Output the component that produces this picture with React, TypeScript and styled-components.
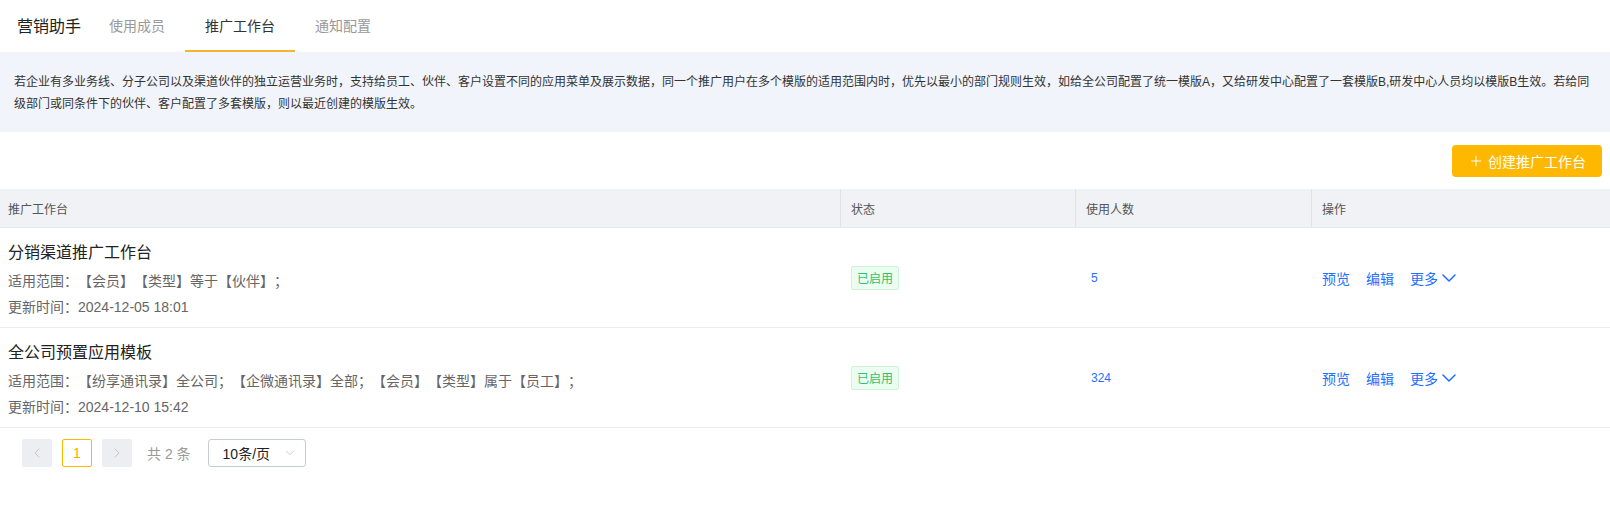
import { createGlobalStyle, styled } from 'styled-components';
import { ChevronDown, ChevronLeft, ChevronRight, Plus } from 'lucide-react';

const GlobalStyle = createGlobalStyle`
  * {
    box-sizing: border-box;
  }
  body {
    margin: 0;
    background: #fff;
    font-family: 'Liberation Sans', 'Noto Sans CJK SC', sans-serif;
    color: #333;
    text-spacing-trim: space-all;
  }
`;

type Workbench = {
  id: number;
  name: string;
  scope: string;
  updatedAt: string;
  enabled: boolean;
  users: number;
};

const workbenches: Workbench[] = [
  {
    id: 1,
    name: '分销渠道推广工作台',
    scope: '【会员】【类型】等于【伙伴】；',
    updatedAt: '2024-12-05 18:01',
    enabled: true,
    users: 5,
  },
  {
    id: 2,
    name: '全公司预置应用模板',
    scope: '【纷享通讯录】全公司；【企微通讯录】全部；【会员】【类型】属于【员工】；',
    updatedAt: '2024-12-10 15:42',
    enabled: true,
    users: 324,
  },
];

const tabs = ['使用成员', '推广工作台', '通知配置'];
const activeTab = '推广工作台';

const COLUMNS = '840px 235px 236px 1fr';

const StyledHeader = styled.header`
  display: flex;
  align-items: stretch;
  height: 52px;
  padding-left: 17px;
`;

const StyledBrand = styled.div`
  display: flex;
  align-items: center;
  font-size: 16px;
  color: #222;
  margin-right: 8px;
  padding-bottom: 2px;
`;

const StyledTab = styled.div<{ $active?: boolean }>`
  display: flex;
  align-items: center;
  padding: 0 20px;
  font-size: 14px;
  color: ${({ $active }) => ($active ? '#333' : '#999')};
  border-bottom: 2px solid ${({ $active }) => ($active ? '#f5b52e' : 'transparent')};
`;

const StyledNotice = styled.div`
  background: #f1f4fa;
  padding: 19px 12px 17px 14px;
  font-size: 12px;
  line-height: 22px;
  color: #333;
`;

const StyledToolbar = styled.div`
  display: flex;
  justify-content: flex-end;
  padding: 13px 8px 12px;
`;

const StyledPrimaryButton = styled.button`
  display: flex;
  align-items: center;
  gap: 4px;
  height: 32px;
  padding: 0 16px;
  border: none;
  border-radius: 4px;
  background: #ffb800;
  color: #fff;
  font-family: inherit;
  font-size: 14px;
  cursor: pointer;
`;

const StyledHeadRow = styled.div`
  display: grid;
  grid-template-columns: ${COLUMNS};
  height: 39px;
  background: #f0f2f6;
  border-bottom: 1px solid #e6e9ef;
`;

const StyledHeadCell = styled.div<{ $first?: boolean }>`
  display: flex;
  align-items: center;
  padding-left: ${({ $first }) => ($first ? '8px' : '10px')};
  font-size: 12px;
  color: #555;
  border-left: ${({ $first }) => ($first ? 'none' : '1px solid #dfe2e8')};
`;

const StyledRow = styled.div`
  display: grid;
  grid-template-columns: ${COLUMNS};
  height: 100px;
  border-bottom: 1px solid #e8ebf0;
`;

const StyledCell = styled.div`
  display: flex;
  align-items: center;
  padding-left: 11px;
`;

const StyledInfoCell = styled.div`
  display: flex;
  flex-direction: column;
  padding: 13px 8px 0;
`;

const StyledName = styled.div`
  font-size: 16px;
  line-height: 24px;
  color: #222;
  margin-bottom: 3px;
`;

const StyledMeta = styled.div`
  font-size: 14px;
  line-height: 26px;
  color: #666;
`;

const StyledStatusTag = styled.span`
  display: inline-flex;
  align-items: center;
  height: 24px;
  padding: 0 5px;
  border: 1px solid #cdf3d9;
  border-radius: 2px;
  background: #ebfdf1;
  color: #31c06f;
  font-size: 12px;
`;

const StyledCount = styled.span`
  padding-left: 5px;
  font-size: 12px;
  color: #1f6fff;
`;

const StyledActions = styled.div`
  display: flex;
  align-items: center;
  gap: 16px;
`;

const StyledAction = styled.a`
  display: inline-flex;
  align-items: center;
  gap: 4px;
  font-size: 14px;
  color: #1f6fff;
  cursor: pointer;
`;

const StyledPagination = styled.div`
  display: flex;
  align-items: center;
  padding: 11px 22px;
  font-size: 14px;
`;

const StyledPageButton = styled.button<{ $current?: boolean }>`
  display: flex;
  align-items: center;
  justify-content: center;
  width: 30px;
  height: 28px;
  margin-right: 10px;
  padding: 0;
  border-radius: 2px;
  border: 1px solid ${({ $current }) => ($current ? '#ffb800' : '#eceef2')};
  background: ${({ $current }) => ($current ? '#fff' : '#eceef2')};
  color: ${({ $current }) => ($current ? '#ffa800' : '#c0c4cc')};
  font-family: inherit;
  font-size: 14px;
`;

const StyledTotal = styled.span`
  margin: 0 17px 0 5px;
  color: #999;
`;

const StyledSizeSelect = styled.div`
  display: flex;
  align-items: center;
  justify-content: space-between;
  width: 98px;
  height: 28px;
  padding: 0 8px 0 14px;
  border: 1px solid #c8ccd4;
  border-radius: 3px;
  color: #222;
  font-size: 14px;
`;

const MoreChevron = () => (
  <svg width="14" height="8" viewBox="0 0 14 8" fill="none">
    <path d="M1 1l6 6 6-6" stroke="currentColor" strokeWidth="1.5" strokeLinecap="round" strokeLinejoin="round" />
  </svg>
);

const WorkbenchRow = ({ item }: { item: Workbench }) => (
  <StyledRow>
    <StyledInfoCell>
      <StyledName>{item.name}</StyledName>
      <StyledMeta>适用范围：{item.scope}</StyledMeta>
      <StyledMeta>更新时间：{item.updatedAt}</StyledMeta>
    </StyledInfoCell>
    <StyledCell>{item.enabled && <StyledStatusTag>已启用</StyledStatusTag>}</StyledCell>
    <StyledCell>
      <StyledCount>{item.users}</StyledCount>
    </StyledCell>
    <StyledCell>
      <StyledActions>
        <StyledAction>预览</StyledAction>
        <StyledAction>编辑</StyledAction>
        <StyledAction>
          更多
          <MoreChevron />
        </StyledAction>
      </StyledActions>
    </StyledCell>
  </StyledRow>
);

const App = () => (
  <>
    <GlobalStyle />
    <StyledHeader>
      <StyledBrand>营销助手</StyledBrand>
      {tabs.map((tab) => (
        <StyledTab key={tab} $active={tab === activeTab}>
          {tab}
        </StyledTab>
      ))}
    </StyledHeader>
    <StyledNotice>
      若企业有多业务线、分子公司以及渠道伙伴的独立运营业务时，支持给员工、伙伴、客户设置不同的应用菜单及展示数据，同一个推广用户在多个模版的适用范围内时，优先以最小的部门规则生效，如给全公司配置了统一模版A，又给研发中心配置了一套模版B,研发中心人员均以模版B生效。若给同级部门或同条件下的伙伴、客户配置了多套模版，则以最近创建的模版生效。
    </StyledNotice>
    <StyledToolbar>
      <StyledPrimaryButton>
        <Plus size={16} strokeWidth={1.5} />
        创建推广工作台
      </StyledPrimaryButton>
    </StyledToolbar>
    <StyledHeadRow>
      <StyledHeadCell $first>推广工作台</StyledHeadCell>
      <StyledHeadCell>状态</StyledHeadCell>
      <StyledHeadCell>使用人数</StyledHeadCell>
      <StyledHeadCell>操作</StyledHeadCell>
    </StyledHeadRow>
    {workbenches.map((item) => (
      <WorkbenchRow key={item.id} item={item} />
    ))}
    <StyledPagination>
      <StyledPageButton>
        <ChevronLeft size={16} strokeWidth={1.5} />
      </StyledPageButton>
      <StyledPageButton $current>1</StyledPageButton>
      <StyledPageButton>
        <ChevronRight size={16} strokeWidth={1.5} />
      </StyledPageButton>
      <StyledTotal>共 2 条</StyledTotal>
      <StyledSizeSelect>
        10条/页
        <ChevronDown size={14} strokeWidth={1.5} color="#c0c4cc" />
      </StyledSizeSelect>
    </StyledPagination>
  </>
);

export default App;
